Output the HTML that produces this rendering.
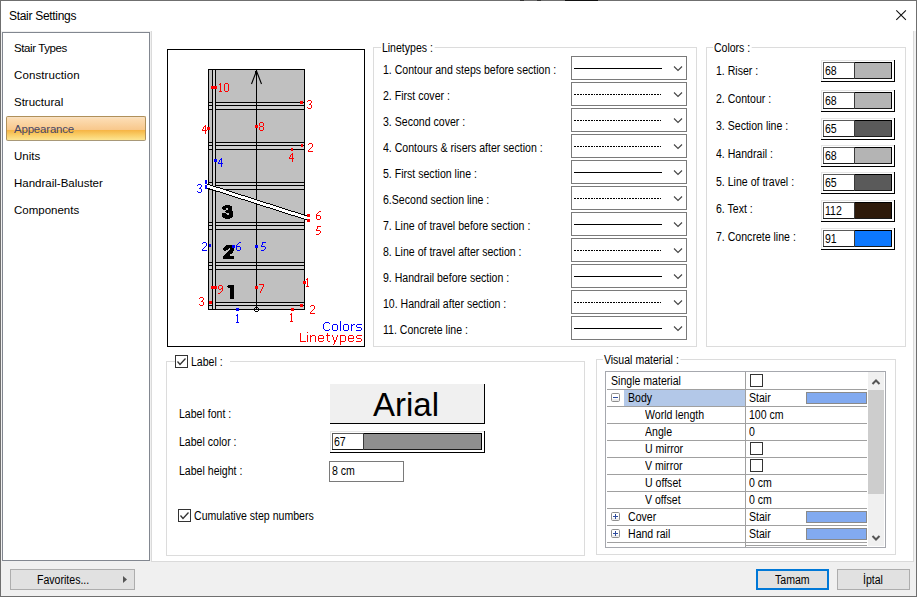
<!DOCTYPE html>
<html><head><meta charset="utf-8"><style>
html,body{margin:0;padding:0;}
body{width:917px;height:597px;position:relative;overflow:hidden;background:#fff;font-family:"Liberation Sans", sans-serif;}
.t{position:absolute;white-space:pre;font-family:"Liberation Sans", sans-serif;}
svg{position:absolute;left:0;top:0;}
</style></head><body>
<svg width="917" height="597" viewBox="0 0 917 597" shape-rendering="auto">
<rect x="0" y="31" width="917" height="566" fill="#f0f0f0" />
<rect x="3" y="33" width="146" height="527" fill="#ffffff" />
<rect x="151" y="31" width="763" height="531" fill="#ffffff" />
<rect x="151" y="31" width="1" height="531" fill="#dadada"/>
<rect x="913" y="31" width="1" height="531" fill="#dadada"/>
<rect x="151" y="561" width="763" height="1" fill="#dadada"/>
<rect x="914" y="31" width="2" height="531" fill="#f0f0f0" />
<rect x="2" y="32" width="148" height="1" fill="#828790"/>
<rect x="2" y="560" width="148" height="1" fill="#828790"/>
<rect x="2" y="32" width="1" height="529" fill="#828790"/>
<rect x="149" y="32" width="1" height="529" fill="#828790"/>
<rect x="0" y="0" width="917" height="1" fill="#6f6f6f"/>
<rect x="0" y="596" width="917" height="1" fill="#6f6f6f"/>
<rect x="0" y="0" width="1" height="597" fill="#6f6f6f"/>
<rect x="916" y="0" width="1" height="597" fill="#6f6f6f"/>
<rect x="565" y="0" width="33" height="1" fill="#111"/>
<rect x="520" y="0" width="4" height="1" fill="#333"/>
<rect x="537" y="0" width="4" height="1" fill="#333"/>
<path d="M896.3 10.3 L905.9 19.9 M905.9 10.3 L896.3 19.9" stroke="#111" stroke-width="1.1" fill="none"/>
<rect x="373" y="47" width="324" height="1" fill="#dcdcdc"/>
<rect x="373" y="346" width="324" height="1" fill="#dcdcdc"/>
<rect x="373" y="47" width="1" height="300" fill="#dcdcdc"/>
<rect x="696" y="47" width="1" height="300" fill="#dcdcdc"/>
<rect x="706" y="47" width="200" height="1" fill="#dcdcdc"/>
<rect x="706" y="346" width="200" height="1" fill="#dcdcdc"/>
<rect x="706" y="47" width="1" height="300" fill="#dcdcdc"/>
<rect x="905" y="47" width="1" height="300" fill="#dcdcdc"/>
<rect x="166" y="361" width="419" height="1" fill="#dcdcdc"/>
<rect x="166" y="555" width="419" height="1" fill="#dcdcdc"/>
<rect x="166" y="361" width="1" height="195" fill="#dcdcdc"/>
<rect x="584" y="361" width="1" height="195" fill="#dcdcdc"/>
<rect x="596" y="359" width="300" height="1" fill="#dcdcdc"/>
<rect x="596" y="554" width="300" height="1" fill="#dcdcdc"/>
<rect x="596" y="359" width="1" height="196" fill="#dcdcdc"/>
<rect x="895" y="359" width="1" height="196" fill="#dcdcdc"/>
<rect x="175" y="355" width="55" height="13" fill="#ffffff" />
<rect x="175" y="355" width="13" height="1" fill="#333333"/>
<rect x="175" y="367" width="13" height="1" fill="#333333"/>
<rect x="175" y="355" width="1" height="13" fill="#333333"/>
<rect x="187" y="355" width="1" height="13" fill="#333333"/>
<path d="M177.5 361.5 L180 364.5 L185.5 358.5" stroke="#333" stroke-width="1.3" fill="none"/>
<rect x="571" y="56" width="116" height="1" fill="#7a7a7a"/>
<rect x="571" y="79" width="116" height="1" fill="#7a7a7a"/>
<rect x="571" y="56" width="1" height="24" fill="#7a7a7a"/>
<rect x="686" y="56" width="1" height="24" fill="#7a7a7a"/>
<rect x="574" y="68" width="88" height="1" fill="#000"/>
<path d="M674 66.5 L678 70.5 L682 66.5" stroke="#444" stroke-width="1.1" fill="none"/>
<rect x="571" y="82" width="116" height="1" fill="#7a7a7a"/>
<rect x="571" y="105" width="116" height="1" fill="#7a7a7a"/>
<rect x="571" y="82" width="1" height="24" fill="#7a7a7a"/>
<rect x="686" y="82" width="1" height="24" fill="#7a7a7a"/>
<rect x="574" y="94" width="2" height="1" fill="#000"/>
<rect x="577" y="94" width="2" height="1" fill="#000"/>
<rect x="580" y="94" width="2" height="1" fill="#000"/>
<rect x="583" y="94" width="1" height="1" fill="#000"/>
<rect x="585" y="94" width="2" height="1" fill="#000"/>
<rect x="588" y="94" width="2" height="1" fill="#000"/>
<rect x="591" y="94" width="2" height="1" fill="#000"/>
<rect x="594" y="94" width="1" height="1" fill="#000"/>
<rect x="596" y="94" width="2" height="1" fill="#000"/>
<rect x="599" y="94" width="2" height="1" fill="#000"/>
<rect x="602" y="94" width="2" height="1" fill="#000"/>
<rect x="605" y="94" width="1" height="1" fill="#000"/>
<rect x="607" y="94" width="2" height="1" fill="#000"/>
<rect x="610" y="94" width="2" height="1" fill="#000"/>
<rect x="613" y="94" width="2" height="1" fill="#000"/>
<rect x="616" y="94" width="1" height="1" fill="#000"/>
<rect x="618" y="94" width="2" height="1" fill="#000"/>
<rect x="621" y="94" width="2" height="1" fill="#000"/>
<rect x="624" y="94" width="2" height="1" fill="#000"/>
<rect x="627" y="94" width="1" height="1" fill="#000"/>
<rect x="629" y="94" width="2" height="1" fill="#000"/>
<rect x="632" y="94" width="2" height="1" fill="#000"/>
<rect x="635" y="94" width="2" height="1" fill="#000"/>
<rect x="638" y="94" width="1" height="1" fill="#000"/>
<rect x="640" y="94" width="2" height="1" fill="#000"/>
<rect x="643" y="94" width="2" height="1" fill="#000"/>
<rect x="646" y="94" width="2" height="1" fill="#000"/>
<rect x="649" y="94" width="1" height="1" fill="#000"/>
<rect x="651" y="94" width="2" height="1" fill="#000"/>
<rect x="654" y="94" width="2" height="1" fill="#000"/>
<rect x="657" y="94" width="2" height="1" fill="#000"/>
<rect x="660" y="94" width="1" height="1" fill="#000"/>
<path d="M674 92.5 L678 96.5 L682 92.5" stroke="#444" stroke-width="1.1" fill="none"/>
<rect x="571" y="108" width="116" height="1" fill="#7a7a7a"/>
<rect x="571" y="131" width="116" height="1" fill="#7a7a7a"/>
<rect x="571" y="108" width="1" height="24" fill="#7a7a7a"/>
<rect x="686" y="108" width="1" height="24" fill="#7a7a7a"/>
<rect x="574" y="120" width="2" height="1" fill="#000"/>
<rect x="577" y="120" width="2" height="1" fill="#000"/>
<rect x="580" y="120" width="2" height="1" fill="#000"/>
<rect x="583" y="120" width="1" height="1" fill="#000"/>
<rect x="585" y="120" width="2" height="1" fill="#000"/>
<rect x="588" y="120" width="2" height="1" fill="#000"/>
<rect x="591" y="120" width="2" height="1" fill="#000"/>
<rect x="594" y="120" width="1" height="1" fill="#000"/>
<rect x="596" y="120" width="2" height="1" fill="#000"/>
<rect x="599" y="120" width="2" height="1" fill="#000"/>
<rect x="602" y="120" width="2" height="1" fill="#000"/>
<rect x="605" y="120" width="1" height="1" fill="#000"/>
<rect x="607" y="120" width="2" height="1" fill="#000"/>
<rect x="610" y="120" width="2" height="1" fill="#000"/>
<rect x="613" y="120" width="2" height="1" fill="#000"/>
<rect x="616" y="120" width="1" height="1" fill="#000"/>
<rect x="618" y="120" width="2" height="1" fill="#000"/>
<rect x="621" y="120" width="2" height="1" fill="#000"/>
<rect x="624" y="120" width="2" height="1" fill="#000"/>
<rect x="627" y="120" width="1" height="1" fill="#000"/>
<rect x="629" y="120" width="2" height="1" fill="#000"/>
<rect x="632" y="120" width="2" height="1" fill="#000"/>
<rect x="635" y="120" width="2" height="1" fill="#000"/>
<rect x="638" y="120" width="1" height="1" fill="#000"/>
<rect x="640" y="120" width="2" height="1" fill="#000"/>
<rect x="643" y="120" width="2" height="1" fill="#000"/>
<rect x="646" y="120" width="2" height="1" fill="#000"/>
<rect x="649" y="120" width="1" height="1" fill="#000"/>
<rect x="651" y="120" width="2" height="1" fill="#000"/>
<rect x="654" y="120" width="2" height="1" fill="#000"/>
<rect x="657" y="120" width="2" height="1" fill="#000"/>
<rect x="660" y="120" width="1" height="1" fill="#000"/>
<path d="M674 118.5 L678 122.5 L682 118.5" stroke="#444" stroke-width="1.1" fill="none"/>
<rect x="571" y="134" width="116" height="1" fill="#7a7a7a"/>
<rect x="571" y="157" width="116" height="1" fill="#7a7a7a"/>
<rect x="571" y="134" width="1" height="24" fill="#7a7a7a"/>
<rect x="686" y="134" width="1" height="24" fill="#7a7a7a"/>
<rect x="574" y="146" width="2" height="1" fill="#000"/>
<rect x="577" y="146" width="2" height="1" fill="#000"/>
<rect x="580" y="146" width="2" height="1" fill="#000"/>
<rect x="583" y="146" width="1" height="1" fill="#000"/>
<rect x="585" y="146" width="2" height="1" fill="#000"/>
<rect x="588" y="146" width="2" height="1" fill="#000"/>
<rect x="591" y="146" width="2" height="1" fill="#000"/>
<rect x="594" y="146" width="1" height="1" fill="#000"/>
<rect x="596" y="146" width="2" height="1" fill="#000"/>
<rect x="599" y="146" width="2" height="1" fill="#000"/>
<rect x="602" y="146" width="2" height="1" fill="#000"/>
<rect x="605" y="146" width="1" height="1" fill="#000"/>
<rect x="607" y="146" width="2" height="1" fill="#000"/>
<rect x="610" y="146" width="2" height="1" fill="#000"/>
<rect x="613" y="146" width="2" height="1" fill="#000"/>
<rect x="616" y="146" width="1" height="1" fill="#000"/>
<rect x="618" y="146" width="2" height="1" fill="#000"/>
<rect x="621" y="146" width="2" height="1" fill="#000"/>
<rect x="624" y="146" width="2" height="1" fill="#000"/>
<rect x="627" y="146" width="1" height="1" fill="#000"/>
<rect x="629" y="146" width="2" height="1" fill="#000"/>
<rect x="632" y="146" width="2" height="1" fill="#000"/>
<rect x="635" y="146" width="2" height="1" fill="#000"/>
<rect x="638" y="146" width="1" height="1" fill="#000"/>
<rect x="640" y="146" width="2" height="1" fill="#000"/>
<rect x="643" y="146" width="2" height="1" fill="#000"/>
<rect x="646" y="146" width="2" height="1" fill="#000"/>
<rect x="649" y="146" width="1" height="1" fill="#000"/>
<rect x="651" y="146" width="2" height="1" fill="#000"/>
<rect x="654" y="146" width="2" height="1" fill="#000"/>
<rect x="657" y="146" width="2" height="1" fill="#000"/>
<rect x="660" y="146" width="1" height="1" fill="#000"/>
<path d="M674 144.5 L678 148.5 L682 144.5" stroke="#444" stroke-width="1.1" fill="none"/>
<rect x="571" y="160" width="116" height="1" fill="#7a7a7a"/>
<rect x="571" y="183" width="116" height="1" fill="#7a7a7a"/>
<rect x="571" y="160" width="1" height="24" fill="#7a7a7a"/>
<rect x="686" y="160" width="1" height="24" fill="#7a7a7a"/>
<rect x="574" y="172" width="88" height="1" fill="#000"/>
<path d="M674 170.5 L678 174.5 L682 170.5" stroke="#444" stroke-width="1.1" fill="none"/>
<rect x="571" y="186" width="116" height="1" fill="#7a7a7a"/>
<rect x="571" y="209" width="116" height="1" fill="#7a7a7a"/>
<rect x="571" y="186" width="1" height="24" fill="#7a7a7a"/>
<rect x="686" y="186" width="1" height="24" fill="#7a7a7a"/>
<rect x="574" y="198" width="2" height="1" fill="#000"/>
<rect x="577" y="198" width="2" height="1" fill="#000"/>
<rect x="580" y="198" width="2" height="1" fill="#000"/>
<rect x="583" y="198" width="1" height="1" fill="#000"/>
<rect x="585" y="198" width="2" height="1" fill="#000"/>
<rect x="588" y="198" width="2" height="1" fill="#000"/>
<rect x="591" y="198" width="2" height="1" fill="#000"/>
<rect x="594" y="198" width="1" height="1" fill="#000"/>
<rect x="596" y="198" width="2" height="1" fill="#000"/>
<rect x="599" y="198" width="2" height="1" fill="#000"/>
<rect x="602" y="198" width="2" height="1" fill="#000"/>
<rect x="605" y="198" width="1" height="1" fill="#000"/>
<rect x="607" y="198" width="2" height="1" fill="#000"/>
<rect x="610" y="198" width="2" height="1" fill="#000"/>
<rect x="613" y="198" width="2" height="1" fill="#000"/>
<rect x="616" y="198" width="1" height="1" fill="#000"/>
<rect x="618" y="198" width="2" height="1" fill="#000"/>
<rect x="621" y="198" width="2" height="1" fill="#000"/>
<rect x="624" y="198" width="2" height="1" fill="#000"/>
<rect x="627" y="198" width="1" height="1" fill="#000"/>
<rect x="629" y="198" width="2" height="1" fill="#000"/>
<rect x="632" y="198" width="2" height="1" fill="#000"/>
<rect x="635" y="198" width="2" height="1" fill="#000"/>
<rect x="638" y="198" width="1" height="1" fill="#000"/>
<rect x="640" y="198" width="2" height="1" fill="#000"/>
<rect x="643" y="198" width="2" height="1" fill="#000"/>
<rect x="646" y="198" width="2" height="1" fill="#000"/>
<rect x="649" y="198" width="1" height="1" fill="#000"/>
<rect x="651" y="198" width="2" height="1" fill="#000"/>
<rect x="654" y="198" width="2" height="1" fill="#000"/>
<rect x="657" y="198" width="2" height="1" fill="#000"/>
<rect x="660" y="198" width="1" height="1" fill="#000"/>
<path d="M674 196.5 L678 200.5 L682 196.5" stroke="#444" stroke-width="1.1" fill="none"/>
<rect x="571" y="212" width="116" height="1" fill="#7a7a7a"/>
<rect x="571" y="235" width="116" height="1" fill="#7a7a7a"/>
<rect x="571" y="212" width="1" height="24" fill="#7a7a7a"/>
<rect x="686" y="212" width="1" height="24" fill="#7a7a7a"/>
<rect x="574" y="224" width="88" height="1" fill="#000"/>
<path d="M674 222.5 L678 226.5 L682 222.5" stroke="#444" stroke-width="1.1" fill="none"/>
<rect x="571" y="238" width="116" height="1" fill="#7a7a7a"/>
<rect x="571" y="261" width="116" height="1" fill="#7a7a7a"/>
<rect x="571" y="238" width="1" height="24" fill="#7a7a7a"/>
<rect x="686" y="238" width="1" height="24" fill="#7a7a7a"/>
<rect x="574" y="250" width="2" height="1" fill="#000"/>
<rect x="577" y="250" width="2" height="1" fill="#000"/>
<rect x="580" y="250" width="2" height="1" fill="#000"/>
<rect x="583" y="250" width="1" height="1" fill="#000"/>
<rect x="585" y="250" width="2" height="1" fill="#000"/>
<rect x="588" y="250" width="2" height="1" fill="#000"/>
<rect x="591" y="250" width="2" height="1" fill="#000"/>
<rect x="594" y="250" width="1" height="1" fill="#000"/>
<rect x="596" y="250" width="2" height="1" fill="#000"/>
<rect x="599" y="250" width="2" height="1" fill="#000"/>
<rect x="602" y="250" width="2" height="1" fill="#000"/>
<rect x="605" y="250" width="1" height="1" fill="#000"/>
<rect x="607" y="250" width="2" height="1" fill="#000"/>
<rect x="610" y="250" width="2" height="1" fill="#000"/>
<rect x="613" y="250" width="2" height="1" fill="#000"/>
<rect x="616" y="250" width="1" height="1" fill="#000"/>
<rect x="618" y="250" width="2" height="1" fill="#000"/>
<rect x="621" y="250" width="2" height="1" fill="#000"/>
<rect x="624" y="250" width="2" height="1" fill="#000"/>
<rect x="627" y="250" width="1" height="1" fill="#000"/>
<rect x="629" y="250" width="2" height="1" fill="#000"/>
<rect x="632" y="250" width="2" height="1" fill="#000"/>
<rect x="635" y="250" width="2" height="1" fill="#000"/>
<rect x="638" y="250" width="1" height="1" fill="#000"/>
<rect x="640" y="250" width="2" height="1" fill="#000"/>
<rect x="643" y="250" width="2" height="1" fill="#000"/>
<rect x="646" y="250" width="2" height="1" fill="#000"/>
<rect x="649" y="250" width="1" height="1" fill="#000"/>
<rect x="651" y="250" width="2" height="1" fill="#000"/>
<rect x="654" y="250" width="2" height="1" fill="#000"/>
<rect x="657" y="250" width="2" height="1" fill="#000"/>
<rect x="660" y="250" width="1" height="1" fill="#000"/>
<path d="M674 248.5 L678 252.5 L682 248.5" stroke="#444" stroke-width="1.1" fill="none"/>
<rect x="571" y="264" width="116" height="1" fill="#7a7a7a"/>
<rect x="571" y="287" width="116" height="1" fill="#7a7a7a"/>
<rect x="571" y="264" width="1" height="24" fill="#7a7a7a"/>
<rect x="686" y="264" width="1" height="24" fill="#7a7a7a"/>
<rect x="574" y="276" width="88" height="1" fill="#000"/>
<path d="M674 274.5 L678 278.5 L682 274.5" stroke="#444" stroke-width="1.1" fill="none"/>
<rect x="571" y="290" width="116" height="1" fill="#7a7a7a"/>
<rect x="571" y="313" width="116" height="1" fill="#7a7a7a"/>
<rect x="571" y="290" width="1" height="24" fill="#7a7a7a"/>
<rect x="686" y="290" width="1" height="24" fill="#7a7a7a"/>
<rect x="574" y="302" width="2" height="1" fill="#000"/>
<rect x="577" y="302" width="2" height="1" fill="#000"/>
<rect x="580" y="302" width="2" height="1" fill="#000"/>
<rect x="583" y="302" width="1" height="1" fill="#000"/>
<rect x="585" y="302" width="2" height="1" fill="#000"/>
<rect x="588" y="302" width="2" height="1" fill="#000"/>
<rect x="591" y="302" width="2" height="1" fill="#000"/>
<rect x="594" y="302" width="1" height="1" fill="#000"/>
<rect x="596" y="302" width="2" height="1" fill="#000"/>
<rect x="599" y="302" width="2" height="1" fill="#000"/>
<rect x="602" y="302" width="2" height="1" fill="#000"/>
<rect x="605" y="302" width="1" height="1" fill="#000"/>
<rect x="607" y="302" width="2" height="1" fill="#000"/>
<rect x="610" y="302" width="2" height="1" fill="#000"/>
<rect x="613" y="302" width="2" height="1" fill="#000"/>
<rect x="616" y="302" width="1" height="1" fill="#000"/>
<rect x="618" y="302" width="2" height="1" fill="#000"/>
<rect x="621" y="302" width="2" height="1" fill="#000"/>
<rect x="624" y="302" width="2" height="1" fill="#000"/>
<rect x="627" y="302" width="1" height="1" fill="#000"/>
<rect x="629" y="302" width="2" height="1" fill="#000"/>
<rect x="632" y="302" width="2" height="1" fill="#000"/>
<rect x="635" y="302" width="2" height="1" fill="#000"/>
<rect x="638" y="302" width="1" height="1" fill="#000"/>
<rect x="640" y="302" width="2" height="1" fill="#000"/>
<rect x="643" y="302" width="2" height="1" fill="#000"/>
<rect x="646" y="302" width="2" height="1" fill="#000"/>
<rect x="649" y="302" width="1" height="1" fill="#000"/>
<rect x="651" y="302" width="2" height="1" fill="#000"/>
<rect x="654" y="302" width="2" height="1" fill="#000"/>
<rect x="657" y="302" width="2" height="1" fill="#000"/>
<rect x="660" y="302" width="1" height="1" fill="#000"/>
<path d="M674 300.5 L678 304.5 L682 300.5" stroke="#444" stroke-width="1.1" fill="none"/>
<rect x="571" y="316" width="116" height="1" fill="#7a7a7a"/>
<rect x="571" y="339" width="116" height="1" fill="#7a7a7a"/>
<rect x="571" y="316" width="1" height="24" fill="#7a7a7a"/>
<rect x="686" y="316" width="1" height="24" fill="#7a7a7a"/>
<rect x="574" y="328" width="88" height="1" fill="#000"/>
<path d="M674 326.5 L678 330.5 L682 326.5" stroke="#444" stroke-width="1.1" fill="none"/>
<rect x="821" y="60" width="74" height="1" fill="#e6e6e6"/>
<rect x="821" y="60" width="1" height="22" fill="#e6e6e6"/>
<rect x="821" y="81" width="74" height="1" fill="#000"/>
<rect x="894" y="60" width="1" height="22" fill="#000"/>
<rect x="823" y="62" width="69" height="17" fill="#fff" />
<rect x="854" y="62" width="38" height="17" fill="#b4b4b4" />
<rect x="823" y="62" width="69" height="1" fill="#5a5a5a"/>
<rect x="823" y="62" width="1" height="17" fill="#5a5a5a"/>
<rect x="823" y="78" width="69" height="1" fill="#1a1a1a"/>
<rect x="891" y="62" width="1" height="17" fill="#000"/>
<rect x="854" y="62" width="38" height="1" fill="#000"/>
<rect x="854" y="62" width="1" height="17" fill="#3a3a3a"/>
<rect x="821" y="90" width="74" height="1" fill="#e6e6e6"/>
<rect x="821" y="90" width="1" height="22" fill="#e6e6e6"/>
<rect x="821" y="111" width="74" height="1" fill="#000"/>
<rect x="894" y="90" width="1" height="22" fill="#000"/>
<rect x="823" y="92" width="69" height="17" fill="#fff" />
<rect x="854" y="92" width="38" height="17" fill="#b4b4b4" />
<rect x="823" y="92" width="69" height="1" fill="#5a5a5a"/>
<rect x="823" y="92" width="1" height="17" fill="#5a5a5a"/>
<rect x="823" y="108" width="69" height="1" fill="#1a1a1a"/>
<rect x="891" y="92" width="1" height="17" fill="#000"/>
<rect x="854" y="92" width="38" height="1" fill="#000"/>
<rect x="854" y="92" width="1" height="17" fill="#3a3a3a"/>
<rect x="821" y="118" width="74" height="1" fill="#e6e6e6"/>
<rect x="821" y="118" width="1" height="22" fill="#e6e6e6"/>
<rect x="821" y="139" width="74" height="1" fill="#000"/>
<rect x="894" y="118" width="1" height="22" fill="#000"/>
<rect x="823" y="120" width="69" height="17" fill="#fff" />
<rect x="854" y="120" width="38" height="17" fill="#5a5a5a" />
<rect x="823" y="120" width="69" height="1" fill="#5a5a5a"/>
<rect x="823" y="120" width="1" height="17" fill="#5a5a5a"/>
<rect x="823" y="136" width="69" height="1" fill="#1a1a1a"/>
<rect x="891" y="120" width="1" height="17" fill="#000"/>
<rect x="854" y="120" width="38" height="1" fill="#000"/>
<rect x="854" y="120" width="1" height="17" fill="#3a3a3a"/>
<rect x="821" y="145" width="74" height="1" fill="#e6e6e6"/>
<rect x="821" y="145" width="1" height="22" fill="#e6e6e6"/>
<rect x="821" y="166" width="74" height="1" fill="#000"/>
<rect x="894" y="145" width="1" height="22" fill="#000"/>
<rect x="823" y="147" width="69" height="17" fill="#fff" />
<rect x="854" y="147" width="38" height="17" fill="#b4b4b4" />
<rect x="823" y="147" width="69" height="1" fill="#5a5a5a"/>
<rect x="823" y="147" width="1" height="17" fill="#5a5a5a"/>
<rect x="823" y="163" width="69" height="1" fill="#1a1a1a"/>
<rect x="891" y="147" width="1" height="17" fill="#000"/>
<rect x="854" y="147" width="38" height="1" fill="#000"/>
<rect x="854" y="147" width="1" height="17" fill="#3a3a3a"/>
<rect x="821" y="172" width="74" height="1" fill="#e6e6e6"/>
<rect x="821" y="172" width="1" height="22" fill="#e6e6e6"/>
<rect x="821" y="193" width="74" height="1" fill="#000"/>
<rect x="894" y="172" width="1" height="22" fill="#000"/>
<rect x="823" y="174" width="69" height="17" fill="#fff" />
<rect x="854" y="174" width="38" height="17" fill="#5a5a5a" />
<rect x="823" y="174" width="69" height="1" fill="#5a5a5a"/>
<rect x="823" y="174" width="1" height="17" fill="#5a5a5a"/>
<rect x="823" y="190" width="69" height="1" fill="#1a1a1a"/>
<rect x="891" y="174" width="1" height="17" fill="#000"/>
<rect x="854" y="174" width="38" height="1" fill="#000"/>
<rect x="854" y="174" width="1" height="17" fill="#3a3a3a"/>
<rect x="821" y="200" width="74" height="1" fill="#e6e6e6"/>
<rect x="821" y="200" width="1" height="22" fill="#e6e6e6"/>
<rect x="821" y="221" width="74" height="1" fill="#000"/>
<rect x="894" y="200" width="1" height="22" fill="#000"/>
<rect x="823" y="202" width="69" height="17" fill="#fff" />
<rect x="854" y="202" width="38" height="17" fill="#2e1a0a" />
<rect x="823" y="202" width="69" height="1" fill="#5a5a5a"/>
<rect x="823" y="202" width="1" height="17" fill="#5a5a5a"/>
<rect x="823" y="218" width="69" height="1" fill="#1a1a1a"/>
<rect x="891" y="202" width="1" height="17" fill="#000"/>
<rect x="854" y="202" width="38" height="1" fill="#000"/>
<rect x="854" y="202" width="1" height="17" fill="#3a3a3a"/>
<rect x="821" y="228" width="74" height="1" fill="#e6e6e6"/>
<rect x="821" y="228" width="1" height="22" fill="#e6e6e6"/>
<rect x="821" y="249" width="74" height="1" fill="#000"/>
<rect x="894" y="228" width="1" height="22" fill="#000"/>
<rect x="823" y="230" width="69" height="17" fill="#fff" />
<rect x="854" y="230" width="38" height="17" fill="#0c78fe" />
<rect x="823" y="230" width="69" height="1" fill="#5a5a5a"/>
<rect x="823" y="230" width="1" height="17" fill="#5a5a5a"/>
<rect x="823" y="246" width="69" height="1" fill="#1a1a1a"/>
<rect x="891" y="230" width="1" height="17" fill="#000"/>
<rect x="854" y="230" width="38" height="1" fill="#000"/>
<rect x="854" y="230" width="1" height="17" fill="#3a3a3a"/>
<rect x="330" y="384" width="155" height="40" fill="#f0f0f0" />
<rect x="330" y="423" width="155" height="1" fill="#000"/>
<rect x="484" y="384" width="1" height="40" fill="#000"/>
<rect x="330" y="431" width="155" height="1" fill="#e6e6e6"/>
<rect x="330" y="431" width="1" height="22" fill="#e6e6e6"/>
<rect x="330" y="452" width="155" height="1" fill="#000"/>
<rect x="484" y="431" width="1" height="22" fill="#000"/>
<rect x="332" y="433" width="150" height="17" fill="#fff" />
<rect x="363" y="433" width="119" height="17" fill="#8f8f8f" />
<rect x="332" y="433" width="150" height="1" fill="#5a5a5a"/>
<rect x="332" y="433" width="1" height="17" fill="#5a5a5a"/>
<rect x="332" y="449" width="150" height="1" fill="#1a1a1a"/>
<rect x="481" y="433" width="1" height="17" fill="#000"/>
<rect x="363" y="433" width="119" height="1" fill="#000"/>
<rect x="363" y="433" width="1" height="17" fill="#3a3a3a"/>
<rect x="329" y="461" width="75" height="1" fill="#7a7a7a"/>
<rect x="329" y="481" width="75" height="1" fill="#7a7a7a"/>
<rect x="329" y="461" width="1" height="21" fill="#7a7a7a"/>
<rect x="403" y="461" width="1" height="21" fill="#7a7a7a"/>
<rect x="178" y="509" width="13" height="1" fill="#333333"/>
<rect x="178" y="521" width="13" height="1" fill="#333333"/>
<rect x="178" y="509" width="1" height="13" fill="#333333"/>
<rect x="190" y="509" width="1" height="13" fill="#333333"/>
<path d="M180.5 515.5 L183 518.5 L188.5 512.5" stroke="#333" stroke-width="1.3" fill="none"/>
<rect x="605" y="371" width="281" height="1" fill="#a6a8ae"/>
<rect x="605" y="547" width="281" height="1" fill="#a6a8ae"/>
<rect x="605" y="371" width="1" height="177" fill="#a6a8ae"/>
<rect x="885" y="371" width="1" height="177" fill="#a6a8ae"/>
<rect x="607" y="389" width="260" height="1" fill="#a0a0a0"/>
<rect x="750" y="374" width="13" height="1" fill="#333"/>
<rect x="750" y="386" width="13" height="1" fill="#333"/>
<rect x="750" y="374" width="1" height="13" fill="#333"/>
<rect x="762" y="374" width="1" height="13" fill="#333"/>
<rect x="624" y="390" width="121" height="16" fill="#b3c8e8" />
<rect x="607" y="406" width="260" height="1" fill="#a0a0a0"/>
<rect x="611.5" y="393.5" width="8" height="8" rx="1.2" fill="#fff" stroke="#8e8e8e"/>
<rect x="612" y="399" width="7" height="2" fill="#ececec" />
<rect x="613" y="397" width="5" height="1" fill="#2e4c9c"/>
<rect x="806" y="392" width="61" height="12" fill="#82aaf0" />
<rect x="806" y="392" width="61" height="1" fill="#8a8a8a"/>
<rect x="806" y="403" width="61" height="1" fill="#8a8a8a"/>
<rect x="806" y="392" width="1" height="12" fill="#8a8a8a"/>
<rect x="866" y="392" width="1" height="12" fill="#8a8a8a"/>
<rect x="607" y="423" width="260" height="1" fill="#a0a0a0"/>
<rect x="607" y="440" width="260" height="1" fill="#a0a0a0"/>
<rect x="607" y="457" width="260" height="1" fill="#a0a0a0"/>
<rect x="750" y="442" width="13" height="1" fill="#333"/>
<rect x="750" y="454" width="13" height="1" fill="#333"/>
<rect x="750" y="442" width="1" height="13" fill="#333"/>
<rect x="762" y="442" width="1" height="13" fill="#333"/>
<rect x="607" y="474" width="260" height="1" fill="#a0a0a0"/>
<rect x="750" y="459" width="13" height="1" fill="#333"/>
<rect x="750" y="471" width="13" height="1" fill="#333"/>
<rect x="750" y="459" width="1" height="13" fill="#333"/>
<rect x="762" y="459" width="1" height="13" fill="#333"/>
<rect x="607" y="491" width="260" height="1" fill="#a0a0a0"/>
<rect x="607" y="508" width="260" height="1" fill="#a0a0a0"/>
<rect x="607" y="525" width="260" height="1" fill="#a0a0a0"/>
<rect x="611.5" y="512.5" width="8" height="8" rx="1.2" fill="#fff" stroke="#8e8e8e"/>
<rect x="612" y="518" width="7" height="2" fill="#ececec" />
<rect x="613" y="516" width="5" height="1" fill="#2e4c9c"/>
<rect x="615" y="514" width="1" height="5" fill="#2e4c9c"/>
<rect x="806" y="511" width="61" height="12" fill="#82aaf0" />
<rect x="806" y="511" width="61" height="1" fill="#8a8a8a"/>
<rect x="806" y="522" width="61" height="1" fill="#8a8a8a"/>
<rect x="806" y="511" width="1" height="12" fill="#8a8a8a"/>
<rect x="866" y="511" width="1" height="12" fill="#8a8a8a"/>
<rect x="607" y="542" width="260" height="1" fill="#a0a0a0"/>
<rect x="611.5" y="529.5" width="8" height="8" rx="1.2" fill="#fff" stroke="#8e8e8e"/>
<rect x="612" y="535" width="7" height="2" fill="#ececec" />
<rect x="613" y="533" width="5" height="1" fill="#2e4c9c"/>
<rect x="615" y="531" width="1" height="5" fill="#2e4c9c"/>
<rect x="806" y="528" width="61" height="12" fill="#82aaf0" />
<rect x="806" y="528" width="61" height="1" fill="#8a8a8a"/>
<rect x="806" y="539" width="61" height="1" fill="#8a8a8a"/>
<rect x="806" y="528" width="1" height="12" fill="#8a8a8a"/>
<rect x="866" y="528" width="1" height="12" fill="#8a8a8a"/>
<rect x="746" y="545" width="121" height="1" fill="#a0a0a0"/>
<rect x="745" y="372" width="1" height="175" fill="#a0a0a0"/>
<rect x="868" y="372" width="16" height="174" fill="#f0f0f0" />
<rect x="868" y="390" width="16" height="104" fill="#cdcdcd" />
<path d="M872.5 384 L876 380.5 L879.5 384" stroke="#555" stroke-width="2" fill="none"/>
<path d="M872.5 536 L876 539.5 L879.5 536" stroke="#555" stroke-width="2" fill="none"/>
<rect x="10" y="569" width="125" height="21" fill="#e1e1e1" />
<rect x="10" y="569" width="125" height="1" fill="#adadad"/>
<rect x="10" y="589" width="125" height="1" fill="#adadad"/>
<rect x="10" y="569" width="1" height="21" fill="#adadad"/>
<rect x="134" y="569" width="1" height="21" fill="#adadad"/>
<path d="M123 576 L127 579.5 L123 583 Z" fill="#555"/>
<rect x="756" y="569" width="73" height="21" fill="#e1e1e1" />
<rect x="756" y="569" width="73" height="1" fill="#0078d7"/>
<rect x="756" y="589" width="73" height="1" fill="#0078d7"/>
<rect x="756" y="569" width="1" height="21" fill="#0078d7"/>
<rect x="828" y="569" width="1" height="21" fill="#0078d7"/>
<rect x="757" y="570" width="71" height="1" fill="#0078d7"/>
<rect x="757" y="588" width="71" height="1" fill="#0078d7"/>
<rect x="757" y="570" width="1" height="19" fill="#0078d7"/>
<rect x="827" y="570" width="1" height="19" fill="#0078d7"/>
<rect x="837" y="569" width="73" height="21" fill="#e1e1e1" />
<rect x="837" y="569" width="73" height="1" fill="#adadad"/>
<rect x="837" y="589" width="73" height="1" fill="#adadad"/>
<rect x="837" y="569" width="1" height="21" fill="#adadad"/>
<rect x="909" y="569" width="1" height="21" fill="#adadad"/>
<rect x="167" y="49" width="198" height="1" fill="#000"/>
<rect x="167" y="346" width="198" height="1" fill="#000"/>
<rect x="167" y="49" width="1" height="298" fill="#000"/>
<rect x="364" y="49" width="1" height="298" fill="#000"/>
<rect x="208" y="69" width="97" height="241" fill="#c0c0c0" />
<rect x="209" y="103" width="95" height="7" fill="#d0d0d0" />
<rect x="209" y="143" width="95" height="7" fill="#d0d0d0" />
<rect x="209" y="183" width="95" height="7" fill="#d0d0d0" />
<rect x="209" y="223" width="95" height="7" fill="#d0d0d0" />
<rect x="209" y="263" width="95" height="7" fill="#d0d0d0" />
<rect x="209" y="303" width="95" height="6" fill="#d0d0d0" />
<rect x="208" y="102" width="97" height="1" fill="#000"/>
<rect x="208" y="105" width="97" height="1" fill="#000"/>
<rect x="208" y="109" width="97" height="1" fill="#000"/>
<rect x="208" y="142" width="97" height="1" fill="#000"/>
<rect x="208" y="145" width="97" height="1" fill="#000"/>
<rect x="208" y="149" width="97" height="1" fill="#000"/>
<rect x="208" y="182" width="97" height="1" fill="#000"/>
<rect x="208" y="185" width="97" height="1" fill="#000"/>
<rect x="208" y="189" width="97" height="1" fill="#000"/>
<rect x="208" y="222" width="97" height="1" fill="#000"/>
<rect x="208" y="225" width="97" height="1" fill="#000"/>
<rect x="208" y="229" width="97" height="1" fill="#000"/>
<rect x="208" y="262" width="97" height="1" fill="#000"/>
<rect x="208" y="265" width="97" height="1" fill="#000"/>
<rect x="208" y="269" width="97" height="1" fill="#000"/>
<rect x="208" y="302" width="97" height="1" fill="#000"/>
<rect x="208" y="305" width="97" height="1" fill="#000"/>
<rect x="208" y="69" width="97" height="1" fill="#000"/>
<rect x="208" y="309" width="97" height="1" fill="#000"/>
<rect x="208" y="69" width="1" height="241" fill="#000"/>
<rect x="304" y="69" width="1" height="241" fill="#000"/>
<rect x="213" y="70" width="2" height="239" fill="#d0d0d0" />
<rect x="212" y="69" width="1" height="241" fill="#000"/>
<rect x="215" y="69" width="1" height="241" fill="#000"/>
<rect x="256" y="70" width="1" height="240" fill="#000"/>
<path d="M256.5 71 L251.5 84 M256.5 71 L261.5 84" stroke="#000" stroke-width="1.1" fill="none"/>
<rect x="255" y="71" width="2" height="2" fill="#000" />
<path d="M205 184h1v3h-1zM206 184h1v3h-1zM207 185h1v3h-1zM208 185h1v3h-1zM209 185h1v3h-1zM210 186h1v3h-1zM211 186h1v3h-1zM212 186h1v3h-1zM213 187h1v3h-1zM214 187h1v3h-1zM215 187h1v3h-1zM216 188h1v3h-1zM217 188h1v3h-1zM218 188h1v3h-1zM219 188h1v3h-1zM220 189h1v3h-1zM221 189h1v3h-1zM222 189h1v3h-1zM223 190h1v3h-1zM224 190h1v3h-1zM225 190h1v3h-1zM226 191h1v3h-1zM227 191h1v3h-1zM228 191h1v3h-1zM229 192h1v3h-1zM230 192h1v3h-1zM231 192h1v3h-1zM232 193h1v3h-1zM233 193h1v3h-1zM234 193h1v3h-1zM235 194h1v3h-1zM236 194h1v3h-1zM237 194h1v3h-1zM238 195h1v3h-1zM239 195h1v3h-1zM240 195h1v3h-1zM241 196h1v3h-1zM242 196h1v3h-1zM243 196h1v3h-1zM244 196h1v3h-1zM245 197h1v3h-1zM246 197h1v3h-1zM247 197h1v3h-1zM248 198h1v3h-1zM249 198h1v3h-1zM250 198h1v3h-1zM251 199h1v3h-1zM252 199h1v3h-1zM253 199h1v3h-1zM254 200h1v3h-1zM255 200h1v3h-1zM256 200h1v3h-1zM257 201h1v3h-1zM258 201h1v3h-1zM259 201h1v3h-1zM260 202h1v3h-1zM261 202h1v3h-1zM262 202h1v3h-1zM263 203h1v3h-1zM264 203h1v3h-1zM265 203h1v3h-1zM266 204h1v3h-1zM267 204h1v3h-1zM268 204h1v3h-1zM269 204h1v3h-1zM270 205h1v3h-1zM271 205h1v3h-1zM272 205h1v3h-1zM273 206h1v3h-1zM274 206h1v3h-1zM275 206h1v3h-1zM276 207h1v3h-1zM277 207h1v3h-1zM278 207h1v3h-1zM279 208h1v3h-1zM280 208h1v3h-1zM281 208h1v3h-1zM282 209h1v3h-1zM283 209h1v3h-1zM284 209h1v3h-1zM285 210h1v3h-1zM286 210h1v3h-1zM287 210h1v3h-1zM288 211h1v3h-1zM289 211h1v3h-1zM290 211h1v3h-1zM291 212h1v3h-1zM292 212h1v3h-1zM293 212h1v3h-1zM294 212h1v3h-1zM295 213h1v3h-1zM296 213h1v3h-1zM297 213h1v3h-1zM298 214h1v3h-1zM299 214h1v3h-1zM300 214h1v3h-1zM301 215h1v3h-1zM302 215h1v3h-1zM303 215h1v3h-1zM304 216h1v3h-1zM305 216h1v3h-1zM306 216h1v3h-1zM307 217h1v3h-1zM308 217h1v3h-1z" fill="#fff" shape-rendering="crispEdges"/>
<path d="M205 183h1v1h-1zM205 187h1v1h-1zM206 183h1v1h-1zM206 187h1v1h-1zM207 184h1v1h-1zM207 188h1v1h-1zM208 184h1v1h-1zM208 188h1v1h-1zM209 184h1v1h-1zM209 188h1v1h-1zM210 185h1v1h-1zM210 189h1v1h-1zM211 185h1v1h-1zM211 189h1v1h-1zM212 185h1v1h-1zM212 189h1v1h-1zM213 186h1v1h-1zM213 190h1v1h-1zM214 186h1v1h-1zM214 190h1v1h-1zM215 186h1v1h-1zM215 190h1v1h-1zM216 187h1v1h-1zM216 191h1v1h-1zM217 187h1v1h-1zM217 191h1v1h-1zM218 187h1v1h-1zM218 191h1v1h-1zM219 187h1v1h-1zM219 191h1v1h-1zM220 188h1v1h-1zM220 192h1v1h-1zM221 188h1v1h-1zM221 192h1v1h-1zM222 188h1v1h-1zM222 192h1v1h-1zM223 189h1v1h-1zM223 193h1v1h-1zM224 189h1v1h-1zM224 193h1v1h-1zM225 189h1v1h-1zM225 193h1v1h-1zM226 190h1v1h-1zM226 194h1v1h-1zM227 190h1v1h-1zM227 194h1v1h-1zM228 190h1v1h-1zM228 194h1v1h-1zM229 191h1v1h-1zM229 195h1v1h-1zM230 191h1v1h-1zM230 195h1v1h-1zM231 191h1v1h-1zM231 195h1v1h-1zM232 192h1v1h-1zM232 196h1v1h-1zM233 192h1v1h-1zM233 196h1v1h-1zM234 192h1v1h-1zM234 196h1v1h-1zM235 193h1v1h-1zM235 197h1v1h-1zM236 193h1v1h-1zM236 197h1v1h-1zM237 193h1v1h-1zM237 197h1v1h-1zM238 194h1v1h-1zM238 198h1v1h-1zM239 194h1v1h-1zM239 198h1v1h-1zM240 194h1v1h-1zM240 198h1v1h-1zM241 195h1v1h-1zM241 199h1v1h-1zM242 195h1v1h-1zM242 199h1v1h-1zM243 195h1v1h-1zM243 199h1v1h-1zM244 195h1v1h-1zM244 199h1v1h-1zM245 196h1v1h-1zM245 200h1v1h-1zM246 196h1v1h-1zM246 200h1v1h-1zM247 196h1v1h-1zM247 200h1v1h-1zM248 197h1v1h-1zM248 201h1v1h-1zM249 197h1v1h-1zM249 201h1v1h-1zM250 197h1v1h-1zM250 201h1v1h-1zM251 198h1v1h-1zM251 202h1v1h-1zM252 198h1v1h-1zM252 202h1v1h-1zM253 198h1v1h-1zM253 202h1v1h-1zM254 199h1v1h-1zM254 203h1v1h-1zM255 199h1v1h-1zM255 203h1v1h-1zM256 199h1v1h-1zM256 203h1v1h-1zM257 200h1v1h-1zM257 204h1v1h-1zM258 200h1v1h-1zM258 204h1v1h-1zM259 200h1v1h-1zM259 204h1v1h-1zM260 201h1v1h-1zM260 205h1v1h-1zM261 201h1v1h-1zM261 205h1v1h-1zM262 201h1v1h-1zM262 205h1v1h-1zM263 202h1v1h-1zM263 206h1v1h-1zM264 202h1v1h-1zM264 206h1v1h-1zM265 202h1v1h-1zM265 206h1v1h-1zM266 203h1v1h-1zM266 207h1v1h-1zM267 203h1v1h-1zM267 207h1v1h-1zM268 203h1v1h-1zM268 207h1v1h-1zM269 203h1v1h-1zM269 207h1v1h-1zM270 204h1v1h-1zM270 208h1v1h-1zM271 204h1v1h-1zM271 208h1v1h-1zM272 204h1v1h-1zM272 208h1v1h-1zM273 205h1v1h-1zM273 209h1v1h-1zM274 205h1v1h-1zM274 209h1v1h-1zM275 205h1v1h-1zM275 209h1v1h-1zM276 206h1v1h-1zM276 210h1v1h-1zM277 206h1v1h-1zM277 210h1v1h-1zM278 206h1v1h-1zM278 210h1v1h-1zM279 207h1v1h-1zM279 211h1v1h-1zM280 207h1v1h-1zM280 211h1v1h-1zM281 207h1v1h-1zM281 211h1v1h-1zM282 208h1v1h-1zM282 212h1v1h-1zM283 208h1v1h-1zM283 212h1v1h-1zM284 208h1v1h-1zM284 212h1v1h-1zM285 209h1v1h-1zM285 213h1v1h-1zM286 209h1v1h-1zM286 213h1v1h-1zM287 209h1v1h-1zM287 213h1v1h-1zM288 210h1v1h-1zM288 214h1v1h-1zM289 210h1v1h-1zM289 214h1v1h-1zM290 210h1v1h-1zM290 214h1v1h-1zM291 211h1v1h-1zM291 215h1v1h-1zM292 211h1v1h-1zM292 215h1v1h-1zM293 211h1v1h-1zM293 215h1v1h-1zM294 211h1v1h-1zM294 215h1v1h-1zM295 212h1v1h-1zM295 216h1v1h-1zM296 212h1v1h-1zM296 216h1v1h-1zM297 212h1v1h-1zM297 216h1v1h-1zM298 213h1v1h-1zM298 217h1v1h-1zM299 213h1v1h-1zM299 217h1v1h-1zM300 213h1v1h-1zM300 217h1v1h-1zM301 214h1v1h-1zM301 218h1v1h-1zM302 214h1v1h-1zM302 218h1v1h-1zM303 214h1v1h-1zM303 218h1v1h-1zM304 215h1v1h-1zM304 219h1v1h-1zM305 215h1v1h-1zM305 219h1v1h-1zM306 215h1v1h-1zM306 219h1v1h-1zM307 216h1v1h-1zM307 220h1v1h-1zM308 216h1v1h-1zM308 220h1v1h-1z" fill="#000" shape-rendering="crispEdges"/>
<path d="M255 307h3v1h-3zM254 308h1v1h-1zM258 308h1v1h-1zM254 309h1v1h-1zM258 309h1v1h-1zM254 310h1v1h-1zM258 310h1v1h-1zM255 311h3v1h-3z" fill="#000" shape-rendering="crispEdges"/>
<path d="M225 205h5v1h-5zM223 206h9v1h-9zM222 207h10v1h-10zM222 208h4v1h-4zM228 208h4v1h-4zM223 209h3v1h-3zM228 209h4v1h-4zM226 210h6v1h-6zM225 211h8v1h-8zM226 212h7v1h-7zM222 213h4v1h-4zM229 213h4v1h-4zM222 214h5v1h-5zM229 214h4v1h-4zM222 215h11v1h-11zM222 216h11v1h-11zM223 217h9v1h-9zM225 218h5v1h-5zM226 245h6v1h-6zM225 246h7v1h-7zM224 247h10v1h-10zM223 248h6v1h-6zM230 248h4v1h-4zM223 249h5v1h-5zM230 249h4v1h-4zM224 250h2v1h-2zM229 250h5v1h-5zM228 251h5v1h-5zM227 252h6v1h-6zM226 253h6v1h-6zM225 254h5v1h-5zM224 255h6v1h-6zM223 256h11v1h-11zM223 257h11v1h-11zM223 258h11v1h-11zM228 285h6v1h-6zM227 286h7v1h-7zM228 287h6v1h-6zM230 288h4v1h-4zM230 289h4v1h-4zM230 290h4v1h-4zM230 291h4v1h-4zM230 292h4v1h-4zM230 293h4v1h-4zM230 294h4v1h-4zM230 295h4v1h-4zM230 296h4v1h-4zM230 297h4v1h-4zM230 298h4v1h-4z" fill="#000" shape-rendering="crispEdges"/>
<path d="M211 86h6v3h-6zM220 83h1v1h-1zM219 84h2v1h-2zM220 85h1v1h-1zM220 86h1v1h-1zM220 87h1v1h-1zM220 88h1v1h-1zM220 89h1v1h-1zM220 90h1v1h-1zM219 91h3v1h-3zM225 83h3v1h-3zM224 84h1v1h-1zM228 84h1v1h-1zM224 85h1v1h-1zM228 85h1v1h-1zM224 86h1v1h-1zM228 86h1v1h-1zM224 87h1v1h-1zM228 87h1v1h-1zM224 88h1v1h-1zM228 88h1v1h-1zM224 89h1v1h-1zM228 89h1v1h-1zM224 90h1v1h-1zM228 90h1v1h-1zM225 91h3v1h-3zM300 101h3v3h-3zM308 100h3v1h-3zM307 101h1v1h-1zM311 101h1v1h-1zM311 102h1v1h-1zM310 103h1v1h-1zM309 104h2v1h-2zM311 105h1v1h-1zM311 106h1v1h-1zM307 107h1v1h-1zM311 107h1v1h-1zM308 108h3v1h-3zM207 127h3v3h-3zM205 125h1v1h-1zM204 126h2v1h-2zM203 127h1v1h-1zM205 127h1v1h-1zM203 128h1v1h-1zM205 128h1v1h-1zM202 129h1v1h-1zM205 129h1v1h-1zM202 130h5v1h-5zM205 131h1v1h-1zM205 132h1v1h-1zM205 133h1v1h-1zM255 125h3v3h-3zM260 122h3v1h-3zM259 123h1v1h-1zM263 123h1v1h-1zM259 124h1v1h-1zM263 124h1v1h-1zM259 125h1v1h-1zM263 125h1v1h-1zM260 126h3v1h-3zM259 127h1v1h-1zM263 127h1v1h-1zM259 128h1v1h-1zM263 128h1v1h-1zM259 129h1v1h-1zM263 129h1v1h-1zM260 130h3v1h-3zM301 144h2v3h-2zM309 143h3v1h-3zM308 144h1v1h-1zM312 144h1v1h-1zM312 145h1v1h-1zM312 146h1v1h-1zM311 147h1v1h-1zM310 148h1v1h-1zM309 149h1v1h-1zM308 150h1v1h-1zM308 151h5v1h-5zM291 148h2v3h-2zM292 153h1v1h-1zM291 154h2v1h-2zM290 155h1v1h-1zM292 155h1v1h-1zM290 156h1v1h-1zM292 156h1v1h-1zM289 157h1v1h-1zM292 157h1v1h-1zM289 158h5v1h-5zM292 159h1v1h-1zM292 160h1v1h-1zM292 161h1v1h-1zM307 214h3v3h-3zM307 219h3v3h-3zM319 211h2v1h-2zM318 212h1v1h-1zM317 213h1v1h-1zM316 214h1v1h-1zM316 215h4v1h-4zM316 216h1v1h-1zM320 216h1v1h-1zM316 217h1v1h-1zM320 217h1v1h-1zM316 218h1v1h-1zM320 218h1v1h-1zM317 219h3v1h-3zM317 226h4v1h-4zM317 227h1v1h-1zM317 228h1v1h-1zM316 229h1v1h-1zM316 230h4v1h-4zM320 231h1v1h-1zM320 232h1v1h-1zM319 233h1v1h-1zM316 234h3v1h-3zM211 286h6v3h-6zM219 285h3v1h-3zM218 286h1v1h-1zM222 286h1v1h-1zM218 287h1v1h-1zM222 287h1v1h-1zM218 288h1v1h-1zM221 288h2v1h-2zM219 289h2v1h-2zM222 289h1v1h-1zM222 290h1v1h-1zM221 291h1v1h-1zM220 292h1v1h-1zM218 293h2v1h-2zM255 286h3v3h-3zM259 284h5v1h-5zM263 285h1v1h-1zM263 286h1v1h-1zM262 287h1v1h-1zM262 288h1v1h-1zM261 289h1v1h-1zM261 290h1v1h-1zM260 291h1v1h-1zM260 292h1v1h-1zM303 281h3v3h-3zM307 278h1v1h-1zM306 279h2v1h-2zM307 280h1v1h-1zM307 281h1v1h-1zM307 282h1v1h-1zM307 283h1v1h-1zM307 284h1v1h-1zM307 285h1v1h-1zM306 286h3v1h-3zM209 301h3v3h-3zM200 297h3v1h-3zM199 298h1v1h-1zM203 298h1v1h-1zM203 299h1v1h-1zM202 300h1v1h-1zM201 301h2v1h-2zM203 302h1v1h-1zM203 303h1v1h-1zM199 304h1v1h-1zM203 304h1v1h-1zM200 305h3v1h-3zM300 304h3v3h-3zM311 305h3v1h-3zM310 306h1v1h-1zM314 306h1v1h-1zM314 307h1v1h-1zM314 308h1v1h-1zM313 309h1v1h-1zM312 310h1v1h-1zM311 311h1v1h-1zM310 312h1v1h-1zM310 313h5v1h-5zM291 308h3v3h-3zM291 313h1v1h-1zM290 314h2v1h-2zM291 315h1v1h-1zM291 316h1v1h-1zM291 317h1v1h-1zM291 318h1v1h-1zM291 319h1v1h-1zM291 320h1v1h-1zM290 321h3v1h-3zM300 333h1v1h-1zM300 334h1v1h-1zM300 335h1v1h-1zM300 336h1v1h-1zM300 337h1v1h-1zM300 338h1v1h-1zM300 339h1v1h-1zM300 340h1v1h-1zM300 341h6v1h-6zM307 332h1v1h-1zM307 335h1v1h-1zM307 336h1v1h-1zM307 337h1v1h-1zM307 338h1v1h-1zM307 339h1v1h-1zM307 340h1v1h-1zM307 341h1v1h-1zM310 335h1v1h-1zM312 335h3v1h-3zM310 336h2v1h-2zM315 336h1v1h-1zM310 337h1v1h-1zM315 337h1v1h-1zM310 338h1v1h-1zM315 338h1v1h-1zM310 339h1v1h-1zM315 339h1v1h-1zM310 340h1v1h-1zM315 340h1v1h-1zM310 341h1v1h-1zM315 341h1v1h-1zM319 335h4v1h-4zM318 336h1v1h-1zM323 336h1v1h-1zM318 337h1v1h-1zM323 337h1v1h-1zM318 338h6v1h-6zM318 339h1v1h-1zM318 340h1v1h-1zM323 340h1v1h-1zM319 341h4v1h-4zM327 333h1v1h-1zM327 334h1v1h-1zM326 335h4v1h-4zM327 336h1v1h-1zM327 337h1v1h-1zM327 338h1v1h-1zM327 339h1v1h-1zM327 340h1v1h-1zM328 341h2v1h-2zM332 335h1v1h-1zM337 335h1v1h-1zM332 336h1v1h-1zM337 336h1v1h-1zM333 337h1v1h-1zM336 337h1v1h-1zM333 338h1v1h-1zM336 338h1v1h-1zM333 339h1v1h-1zM336 339h1v1h-1zM334 340h2v1h-2zM334 341h2v1h-2zM334 342h1v1h-1zM334 343h1v1h-1zM333 344h1v1h-1zM340 335h5v1h-5zM340 336h1v1h-1zM345 336h1v1h-1zM340 337h1v1h-1zM345 337h1v1h-1zM340 338h1v1h-1zM345 338h1v1h-1zM340 339h1v1h-1zM345 339h1v1h-1zM340 340h1v1h-1zM345 340h1v1h-1zM340 341h5v1h-5zM340 342h1v1h-1zM340 343h1v1h-1zM340 344h1v1h-1zM349 335h4v1h-4zM348 336h1v1h-1zM353 336h1v1h-1zM348 337h1v1h-1zM353 337h1v1h-1zM348 338h6v1h-6zM348 339h1v1h-1zM348 340h1v1h-1zM353 340h1v1h-1zM349 341h4v1h-4zM357 335h5v1h-5zM356 336h1v1h-1zM356 337h1v1h-1zM357 338h4v1h-4zM361 339h1v1h-1zM361 340h1v1h-1zM356 341h5v1h-5z" fill="#ff0000" shape-rendering="crispEdges"/>
<path d="M214 159h3v3h-3zM221 158h1v1h-1zM220 159h2v1h-2zM219 160h1v1h-1zM221 160h1v1h-1zM219 161h1v1h-1zM221 161h1v1h-1zM218 162h1v1h-1zM221 162h1v1h-1zM218 163h5v1h-5zM221 164h1v1h-1zM221 165h1v1h-1zM221 166h1v1h-1zM205 180h2v4h-2zM205 185h2v4h-2zM198 184h3v1h-3zM197 185h1v1h-1zM201 185h1v1h-1zM201 186h1v1h-1zM200 187h1v1h-1zM199 188h2v1h-2zM201 189h1v1h-1zM201 190h1v1h-1zM197 191h1v1h-1zM201 191h1v1h-1zM198 192h3v1h-3zM209 244h2v3h-2zM203 242h3v1h-3zM202 243h1v1h-1zM206 243h1v1h-1zM206 244h1v1h-1zM206 245h1v1h-1zM205 246h1v1h-1zM204 247h1v1h-1zM203 248h1v1h-1zM202 249h1v1h-1zM202 250h5v1h-5zM232 245h3v3h-3zM239 242h2v1h-2zM238 243h1v1h-1zM237 244h1v1h-1zM236 245h1v1h-1zM236 246h4v1h-4zM236 247h1v1h-1zM240 247h1v1h-1zM236 248h1v1h-1zM240 248h1v1h-1zM236 249h1v1h-1zM240 249h1v1h-1zM237 250h3v1h-3zM255 245h3v3h-3zM262 242h4v1h-4zM262 243h1v1h-1zM262 244h1v1h-1zM261 245h1v1h-1zM261 246h4v1h-4zM265 247h1v1h-1zM265 248h1v1h-1zM264 249h1v1h-1zM261 250h3v1h-3zM236 308h3v3h-3zM237 314h1v1h-1zM236 315h2v1h-2zM237 316h1v1h-1zM237 317h1v1h-1zM237 318h1v1h-1zM237 319h1v1h-1zM237 320h1v1h-1zM237 321h1v1h-1zM236 322h3v1h-3zM325 322h4v1h-4zM324 323h1v1h-1zM329 323h1v1h-1zM323 324h1v1h-1zM323 325h1v1h-1zM323 326h1v1h-1zM323 327h1v1h-1zM323 328h1v1h-1zM324 329h1v1h-1zM329 329h1v1h-1zM325 330h4v1h-4zM333 324h4v1h-4zM332 325h1v1h-1zM337 325h1v1h-1zM332 326h1v1h-1zM337 326h1v1h-1zM332 327h1v1h-1zM337 327h1v1h-1zM332 328h1v1h-1zM337 328h1v1h-1zM332 329h1v1h-1zM337 329h1v1h-1zM333 330h4v1h-4zM340 321h1v1h-1zM340 322h1v1h-1zM340 323h1v1h-1zM340 324h1v1h-1zM340 325h1v1h-1zM340 326h1v1h-1zM340 327h1v1h-1zM340 328h1v1h-1zM340 329h1v1h-1zM340 330h1v1h-1zM344 324h4v1h-4zM343 325h1v1h-1zM348 325h1v1h-1zM343 326h1v1h-1zM348 326h1v1h-1zM343 327h1v1h-1zM348 327h1v1h-1zM343 328h1v1h-1zM348 328h1v1h-1zM343 329h1v1h-1zM348 329h1v1h-1zM344 330h4v1h-4zM351 324h1v1h-1zM353 324h2v1h-2zM351 325h2v1h-2zM351 326h1v1h-1zM351 327h1v1h-1zM351 328h1v1h-1zM351 329h1v1h-1zM351 330h1v1h-1zM357 324h5v1h-5zM356 325h1v1h-1zM356 326h1v1h-1zM357 327h4v1h-4zM361 328h1v1h-1zM361 329h1v1h-1zM356 330h5v1h-5z" fill="#0000ff" shape-rendering="crispEdges"/>
</svg>
<div class="t" style="left:9px;top:10px;font-size:12px;line-height:12px;color:#000;letter-spacing:-0.3px;">Stair Settings</div>
<div class="t" style="left:14px;top:43px;font-size:11.5px;line-height:11.5px;color:#000;letter-spacing:-0.4px;">Stair Types</div>
<div class="t" style="left:14px;top:70px;font-size:11.5px;line-height:11.5px;color:#000;letter-spacing:0.1px;">Construction</div>
<div class="t" style="left:14px;top:97px;font-size:11.5px;line-height:11.5px;color:#000;letter-spacing:0px;">Structural</div>
<div style="position:absolute;left:6px;top:116px;width:138px;height:23px;border:1px solid #b0905a;border-bottom-color:#a89878;border-radius:2px;background:linear-gradient(#f6e2c8 0%,#fcdcb2 8%,#f8c88c 55%,#f6b444 57%,#f9ca62 75%,#fde592 100%);"></div>
<div class="t" style="left:14px;top:124px;font-size:11.5px;line-height:11.5px;color:#474765;letter-spacing:-0.2px;">Appearance</div>
<div class="t" style="left:14px;top:151px;font-size:11.5px;line-height:11.5px;color:#000;letter-spacing:0px;">Units</div>
<div class="t" style="left:14px;top:178px;font-size:11.5px;line-height:11.5px;color:#000;letter-spacing:0px;">Handrail-Baluster</div>
<div class="t" style="left:14px;top:205px;font-size:11.5px;line-height:11.5px;color:#000;letter-spacing:0px;">Components</div>
<div class="t" style="left:382px;top:42px;font-size:12px;line-height:12px;color:#000;letter-spacing:0.0px;transform:scaleX(0.88);transform-origin:0 0;margin-left:-1px;"><span style="background:#fff;padding:0 2px 0 1px">Linetypes :</span></div>
<div class="t" style="left:714px;top:42px;font-size:12px;line-height:12px;color:#000;letter-spacing:0.0px;transform:scaleX(0.88);transform-origin:0 0;margin-left:-1px;"><span style="background:#fff;padding:0 2px 0 1px">Colors :</span></div>
<div class="t" style="left:604px;top:354px;font-size:12px;line-height:12px;color:#000;letter-spacing:0.0px;transform:scaleX(0.88);transform-origin:0 0;margin-left:-1px;"><span style="background:#fff;padding:0 2px 0 1px">Visual material :</span></div>
<div class="t" style="left:191px;top:356px;font-size:12px;line-height:12px;color:#000;letter-spacing:0.0px;transform:scaleX(0.88);transform-origin:0 0;">Label :</div>
<div class="t" style="left:383px;top:64px;font-size:12px;line-height:12px;color:#000;letter-spacing:0.0px;transform:scaleX(0.88);transform-origin:0 0;">1. Contour and steps before section :</div>
<div class="t" style="left:383px;top:90px;font-size:12px;line-height:12px;color:#000;letter-spacing:0.0px;transform:scaleX(0.88);transform-origin:0 0;">2. First cover :</div>
<div class="t" style="left:383px;top:116px;font-size:12px;line-height:12px;color:#000;letter-spacing:0.0px;transform:scaleX(0.88);transform-origin:0 0;">3. Second cover :</div>
<div class="t" style="left:383px;top:142px;font-size:12px;line-height:12px;color:#000;letter-spacing:0.0px;transform:scaleX(0.88);transform-origin:0 0;">4. Contours &amp; risers after section :</div>
<div class="t" style="left:383px;top:168px;font-size:12px;line-height:12px;color:#000;letter-spacing:0.0px;transform:scaleX(0.88);transform-origin:0 0;">5. First section line :</div>
<div class="t" style="left:383px;top:194px;font-size:12px;line-height:12px;color:#000;letter-spacing:0.0px;transform:scaleX(0.88);transform-origin:0 0;">6.Second section line :</div>
<div class="t" style="left:383px;top:220px;font-size:12px;line-height:12px;color:#000;letter-spacing:0.0px;transform:scaleX(0.88);transform-origin:0 0;">7. Line of travel before section :</div>
<div class="t" style="left:383px;top:246px;font-size:12px;line-height:12px;color:#000;letter-spacing:0.0px;transform:scaleX(0.88);transform-origin:0 0;">8. Line of travel after section :</div>
<div class="t" style="left:383px;top:272px;font-size:12px;line-height:12px;color:#000;letter-spacing:0.0px;transform:scaleX(0.88);transform-origin:0 0;">9. Handrail before section :</div>
<div class="t" style="left:383px;top:298px;font-size:12px;line-height:12px;color:#000;letter-spacing:0.0px;transform:scaleX(0.88);transform-origin:0 0;">10. Handrail after section :</div>
<div class="t" style="left:383px;top:324px;font-size:12px;line-height:12px;color:#000;letter-spacing:0.0px;transform:scaleX(0.88);transform-origin:0 0;">11. Concrete line :</div>
<div class="t" style="left:716px;top:65px;font-size:12px;line-height:12px;color:#000;letter-spacing:0.0px;transform:scaleX(0.88);transform-origin:0 0;">1. Riser :</div>
<div class="t" style="left:825px;top:65px;font-size:12px;line-height:12px;color:#000;letter-spacing:0.0px;transform:scaleX(0.88);transform-origin:0 0;">68</div>
<div class="t" style="left:716px;top:93px;font-size:12px;line-height:12px;color:#000;letter-spacing:0.0px;transform:scaleX(0.88);transform-origin:0 0;">2. Contour :</div>
<div class="t" style="left:825px;top:95px;font-size:12px;line-height:12px;color:#000;letter-spacing:0.0px;transform:scaleX(0.88);transform-origin:0 0;">68</div>
<div class="t" style="left:716px;top:120px;font-size:12px;line-height:12px;color:#000;letter-spacing:0.0px;transform:scaleX(0.88);transform-origin:0 0;">3. Section line :</div>
<div class="t" style="left:825px;top:123px;font-size:12px;line-height:12px;color:#000;letter-spacing:0.0px;transform:scaleX(0.88);transform-origin:0 0;">65</div>
<div class="t" style="left:716px;top:148px;font-size:12px;line-height:12px;color:#000;letter-spacing:0.0px;transform:scaleX(0.88);transform-origin:0 0;">4. Handrail :</div>
<div class="t" style="left:825px;top:150px;font-size:12px;line-height:12px;color:#000;letter-spacing:0.0px;transform:scaleX(0.88);transform-origin:0 0;">68</div>
<div class="t" style="left:716px;top:176px;font-size:12px;line-height:12px;color:#000;letter-spacing:0.0px;transform:scaleX(0.88);transform-origin:0 0;">5. Line of travel :</div>
<div class="t" style="left:825px;top:177px;font-size:12px;line-height:12px;color:#000;letter-spacing:0.0px;transform:scaleX(0.88);transform-origin:0 0;">65</div>
<div class="t" style="left:716px;top:203px;font-size:12px;line-height:12px;color:#000;letter-spacing:0.0px;transform:scaleX(0.88);transform-origin:0 0;">6. Text :</div>
<div class="t" style="left:825px;top:205px;font-size:12px;line-height:12px;color:#000;letter-spacing:0.0px;transform:scaleX(0.88);transform-origin:0 0;">112</div>
<div class="t" style="left:716px;top:231px;font-size:12px;line-height:12px;color:#000;letter-spacing:0.0px;transform:scaleX(0.88);transform-origin:0 0;">7. Concrete line :</div>
<div class="t" style="left:825px;top:233px;font-size:12px;line-height:12px;color:#000;letter-spacing:0.0px;transform:scaleX(0.88);transform-origin:0 0;">91</div>
<div class="t" style="left:179px;top:408px;font-size:12px;line-height:12px;color:#000;letter-spacing:0.0px;transform:scaleX(0.88);transform-origin:0 0;">Label font :</div>
<div class="t" style="left:179px;top:436px;font-size:12px;line-height:12px;color:#000;letter-spacing:0.0px;transform:scaleX(0.88);transform-origin:0 0;">Label color :</div>
<div class="t" style="left:179px;top:465px;font-size:12px;line-height:12px;color:#000;letter-spacing:0.0px;transform:scaleX(0.88);transform-origin:0 0;">Label height :</div>
<div class="t" style="left:373px;top:388px;font-size:33px;line-height:33px;color:#000;font-family:"Liberation Sans",sans-serif;">Arial</div>
<div class="t" style="left:334px;top:436px;font-size:12px;line-height:12px;color:#000;letter-spacing:0.0px;transform:scaleX(0.88);transform-origin:0 0;">67</div>
<div class="t" style="left:332px;top:465px;font-size:12px;line-height:12px;color:#000;letter-spacing:0.0px;transform:scaleX(0.88);transform-origin:0 0;">8 cm</div>
<div class="t" style="left:194px;top:510px;font-size:12px;line-height:12px;color:#000;letter-spacing:0.0px;transform:scaleX(0.88);transform-origin:0 0;">Cumulative step numbers</div>
<div class="t" style="left:611px;top:375px;font-size:12px;line-height:12px;color:#000;letter-spacing:0.0px;transform:scaleX(0.88);transform-origin:0 0;">Single material</div>
<div class="t" style="left:628px;top:392px;font-size:12px;line-height:12px;color:#000;letter-spacing:0.0px;transform:scaleX(0.88);transform-origin:0 0;">Body</div>
<div class="t" style="left:749px;top:392px;font-size:12px;line-height:12px;color:#000;letter-spacing:0.0px;transform:scaleX(0.88);transform-origin:0 0;">Stair</div>
<div class="t" style="left:645px;top:409px;font-size:12px;line-height:12px;color:#000;letter-spacing:0.0px;transform:scaleX(0.88);transform-origin:0 0;">World length</div>
<div class="t" style="left:749px;top:409px;font-size:12px;line-height:12px;color:#000;letter-spacing:0.0px;transform:scaleX(0.88);transform-origin:0 0;">100 cm</div>
<div class="t" style="left:645px;top:426px;font-size:12px;line-height:12px;color:#000;letter-spacing:0.0px;transform:scaleX(0.88);transform-origin:0 0;">Angle</div>
<div class="t" style="left:749px;top:426px;font-size:12px;line-height:12px;color:#000;letter-spacing:0.0px;transform:scaleX(0.88);transform-origin:0 0;">0</div>
<div class="t" style="left:645px;top:443px;font-size:12px;line-height:12px;color:#000;letter-spacing:0.0px;transform:scaleX(0.88);transform-origin:0 0;">U mirror</div>
<div class="t" style="left:645px;top:460px;font-size:12px;line-height:12px;color:#000;letter-spacing:0.0px;transform:scaleX(0.88);transform-origin:0 0;">V mirror</div>
<div class="t" style="left:645px;top:477px;font-size:12px;line-height:12px;color:#000;letter-spacing:0.0px;transform:scaleX(0.88);transform-origin:0 0;">U offset</div>
<div class="t" style="left:749px;top:477px;font-size:12px;line-height:12px;color:#000;letter-spacing:0.0px;transform:scaleX(0.88);transform-origin:0 0;">0 cm</div>
<div class="t" style="left:645px;top:494px;font-size:12px;line-height:12px;color:#000;letter-spacing:0.0px;transform:scaleX(0.88);transform-origin:0 0;">V offset</div>
<div class="t" style="left:749px;top:494px;font-size:12px;line-height:12px;color:#000;letter-spacing:0.0px;transform:scaleX(0.88);transform-origin:0 0;">0 cm</div>
<div class="t" style="left:628px;top:511px;font-size:12px;line-height:12px;color:#000;letter-spacing:0.0px;transform:scaleX(0.88);transform-origin:0 0;">Cover</div>
<div class="t" style="left:749px;top:511px;font-size:12px;line-height:12px;color:#000;letter-spacing:0.0px;transform:scaleX(0.88);transform-origin:0 0;">Stair</div>
<div class="t" style="left:628px;top:528px;font-size:12px;line-height:12px;color:#000;letter-spacing:0.0px;transform:scaleX(0.88);transform-origin:0 0;">Hand rail</div>
<div class="t" style="left:749px;top:528px;font-size:12px;line-height:12px;color:#000;letter-spacing:0.0px;transform:scaleX(0.88);transform-origin:0 0;">Stair</div>
<div class="t" style="left:37px;top:574px;font-size:12px;line-height:12px;color:#000;letter-spacing:0.0px;transform:scaleX(0.88);transform-origin:0 0;">Favorites...</div>
<div class="t" style="left:775px;top:574px;font-size:12px;line-height:12px;color:#000;letter-spacing:0.0px;transform:scaleX(0.88);transform-origin:0 0;">Tamam</div>
<div class="t" style="left:863px;top:574px;font-size:12px;line-height:12px;color:#000;letter-spacing:0.0px;transform:scaleX(0.88);transform-origin:0 0;">İptal</div>
</body></html>
